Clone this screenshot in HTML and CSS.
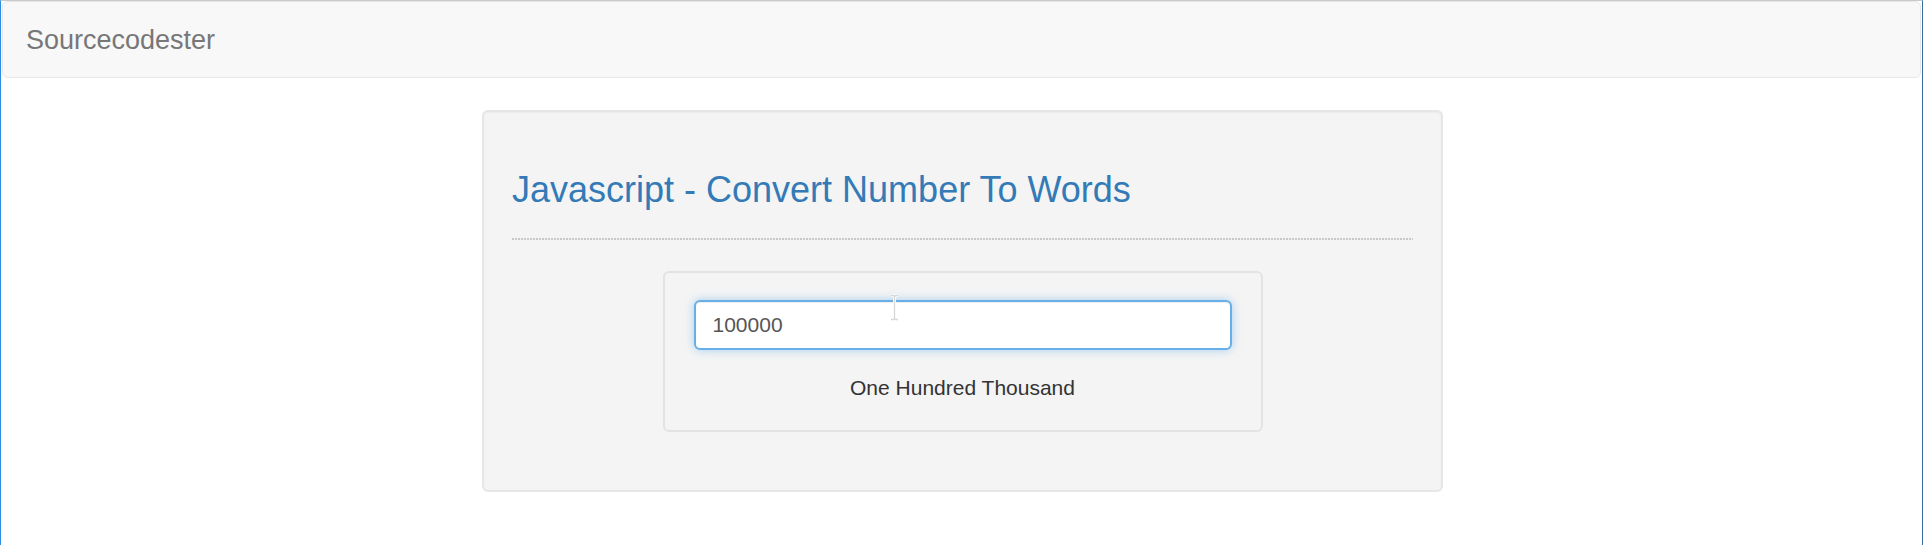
FILE: index.html
```html
<!DOCTYPE html>
<html lang="en">
<head>
<meta charset="utf-8">
<title>Javascript - Convert Number To Words</title>
<link rel="stylesheet" href="styles.css">
</head>
<body>
  <nav class="navbar">
    <a class="brand" href="#">Sourcecodester</a>
  </nav>
  <main class="well">
    <h3 class="title">Javascript - Convert Number To Words</h3>
    <hr class="divider">
    <div class="converter">
      <div class="field">
        <input class="number-input" type="text" value="100000">
        <svg class="ibeam" width="9" height="27" viewBox="0 0 9 27" aria-hidden="true">
          <path d="M1 1.5h2.5l1 1 1-1H8M4.5 2.5v22M1 25.5h2.5l1-1 1 1H8" fill="none" stroke="#ffffff" stroke-width="3"/>
          <path d="M1 1.5h2.5l1 1 1-1H8M4.5 2.5v22M1 25.5h2.5l1-1 1 1H8" fill="none" stroke="#d6d6d6" stroke-width="1.3"/>
        </svg>
      </div>
      <p class="result">One Hundred Thousand</p>
    </div>
  </main>
</body>
</html>
```

FILE: styles.css
```css
html {
  background: #ffffff;
}

body {
  margin: 0;
  min-height: 100vh;
  box-sizing: border-box;
  border-top: 1px solid #c9c9c9;
  border-left: 1px solid #2b8fe6;
  border-right: 1px solid #3a6e9f;
  font-family: "Liberation Sans", Arial, sans-serif;
  color: #333333;
  background: #ffffff;
}

.navbar {
  margin: 0 1px;
  height: 77px;
  box-sizing: border-box;
  background: #f8f8f8;
  border: 1px solid #e7e7e7;
  border-radius: 6px;
  display: flex;
  align-items: center;
}

.brand {
  padding: 0 23px 0 23px;
  font-size: 27px;
  line-height: 30px;
  color: #777777;
  text-decoration: none;
}

.well {
  display: block;
  width: 961px;
  box-sizing: border-box;
  margin: 32px 0 0 calc(50% - 479.5px);
  padding: 26px 28px 28px;
  background: #f4f4f4;
  border: 2px solid #e6e6e6;
  border-radius: 6px;
  box-shadow: inset 0 1px 2px rgba(0, 0, 0, 0.04);
}

.title {
  margin: 32px 0 0;
  font-size: 36px;
  line-height: 40px;
  font-weight: normal;
  color: #337ab7;
}

.divider {
  margin: 28px 0 31px;
  height: 2px;
  border: 0;
  background: repeating-linear-gradient(to right, #c8c8c8 0 2px, transparent 2px 3px);
}

.converter {
  width: 600px;
  box-sizing: border-box;
  margin: 0 auto 30px;
  padding: 27px 29px;
  background: #f4f4f4;
  border: 2px solid #e3e3e3;
  border-radius: 6px;
}

.field {
  position: relative;
}

.number-input {
  display: block;
  width: 100%;
  height: 50px;
  box-sizing: border-box;
  padding: 0 17px;
  font-family: "Liberation Sans", Arial, sans-serif;
  font-size: 21px;
  color: #555555;
  background: #ffffff;
  border: 2px solid #66afe9;
  border-radius: 6px;
  outline: none;
  box-shadow: inset 0 1px 1px rgba(0, 0, 0, 0.075), 0 0 10px rgba(102, 175, 233, 0.55);
}

.ibeam {
  position: absolute;
  left: 196px;
  top: -6px;
}

.result {
  margin: 23px 0 0;
  font-size: 21px;
  line-height: 30px;
  text-align: center;
  color: #333333;
}
```
